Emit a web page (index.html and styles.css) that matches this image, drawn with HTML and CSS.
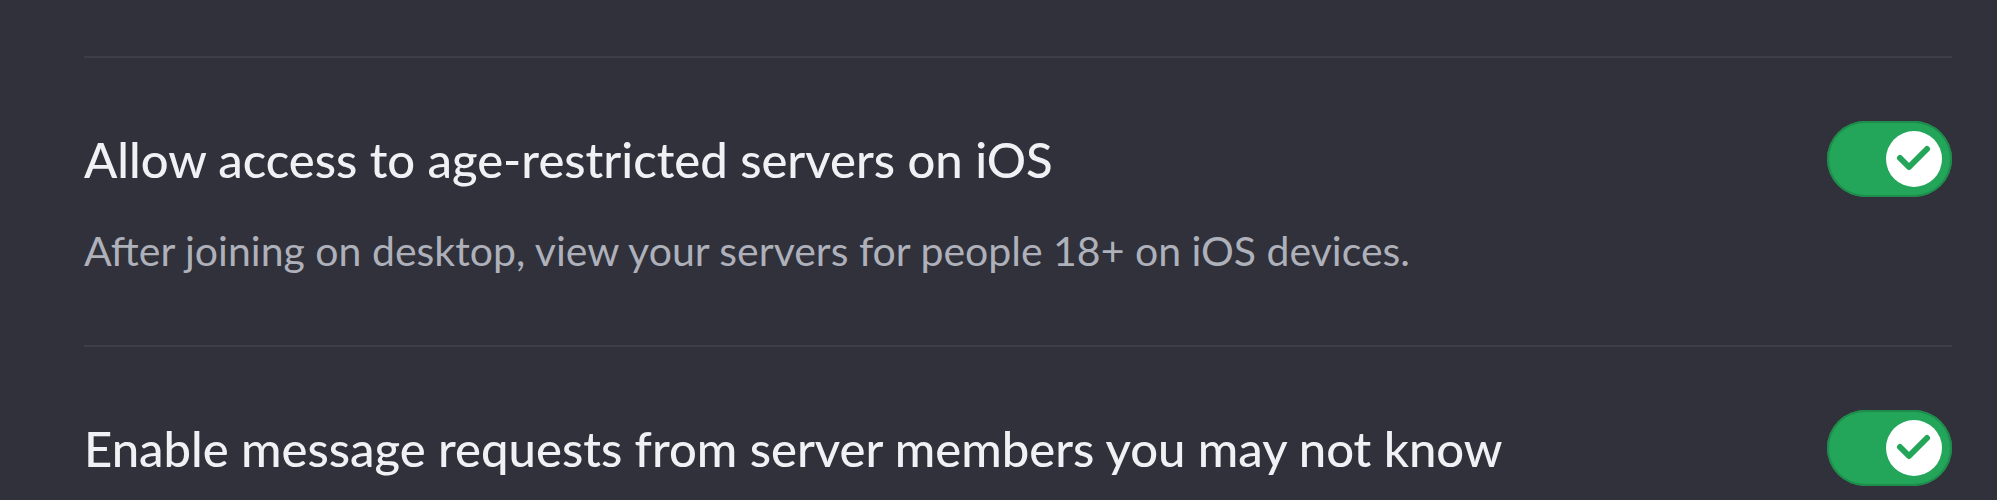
FILE: index.html
```html
<!DOCTYPE html>
<html lang="en">
<head>
<meta charset="utf-8">
<title>Privacy settings</title>
<link rel="stylesheet" href="styles.css">
</head>
<body>
<main class="settings">
  <section class="setting">
    <div class="setting-head">
      <h2 class="setting-title">Allow access to age-restricted servers on iOS</h2>
      <span class="toggle toggle-on" role="switch" aria-checked="true">
        <span class="knob">
          <svg class="check" viewBox="0 0 56 56" width="56" height="56"><path d="M14 27 L23 36 L41 18"/></svg>
        </span>
      </span>
    </div>
    <p class="setting-desc">After joining on desktop, view your servers for people 18+ on iOS devices.</p>
  </section>
  <section class="setting setting-last">
    <div class="setting-head">
      <h2 class="setting-title">Enable message requests from server members you may not know</h2>
      <span class="toggle toggle-on" role="switch" aria-checked="true">
        <span class="knob">
          <svg class="check" viewBox="0 0 56 56" width="56" height="56"><path d="M14 27 L23 36 L41 18"/></svg>
        </span>
      </span>
    </div>
  </section>
</main>
</body>
</html>
```

FILE: styles.css
```css
html, body {
  margin: 0;
  padding: 0;
  background: #30313a;
  height: 500px;
  overflow: hidden;
}

.settings {
  padding: 56px 45px 0 84px;
  font-family: Lato, "Noto Sans", sans-serif;
}

.setting {
  border-top: 2px solid #3d3e48;
  padding: 63px 0 69px;
}

.setting-last {
  padding-bottom: 0;
}

.setting-head {
  display: flex;
  align-items: center;
  justify-content: space-between;
  height: 76px;
}

.setting-title {
  margin: 0;
  font-size: 49px;
  font-weight: 500;
  line-height: 60px;
  color: #f0f1f4;
}

.setting-desc {
  margin: 29px 0 0;
  font-size: 41px;
  font-weight: 400;
  line-height: 50px;
  color: #aeb0ba;
}

.toggle {
  flex: none;
  display: flex;
  align-items: center;
  justify-content: flex-end;
  box-sizing: border-box;
  width: 125px;
  height: 76px;
  padding-right: 10px;
  border-radius: 38px;
  background: #23a55a;
  box-shadow: inset 0 0 0 2px #1e8d4c;
}

.knob {
  display: flex;
  width: 56px;
  height: 56px;
  border-radius: 50%;
  background: #ffffff;
}

.check path {
  fill: none;
  stroke: #23a55a;
  stroke-width: 6;
  stroke-linecap: round;
  stroke-linejoin: round;
}
```
